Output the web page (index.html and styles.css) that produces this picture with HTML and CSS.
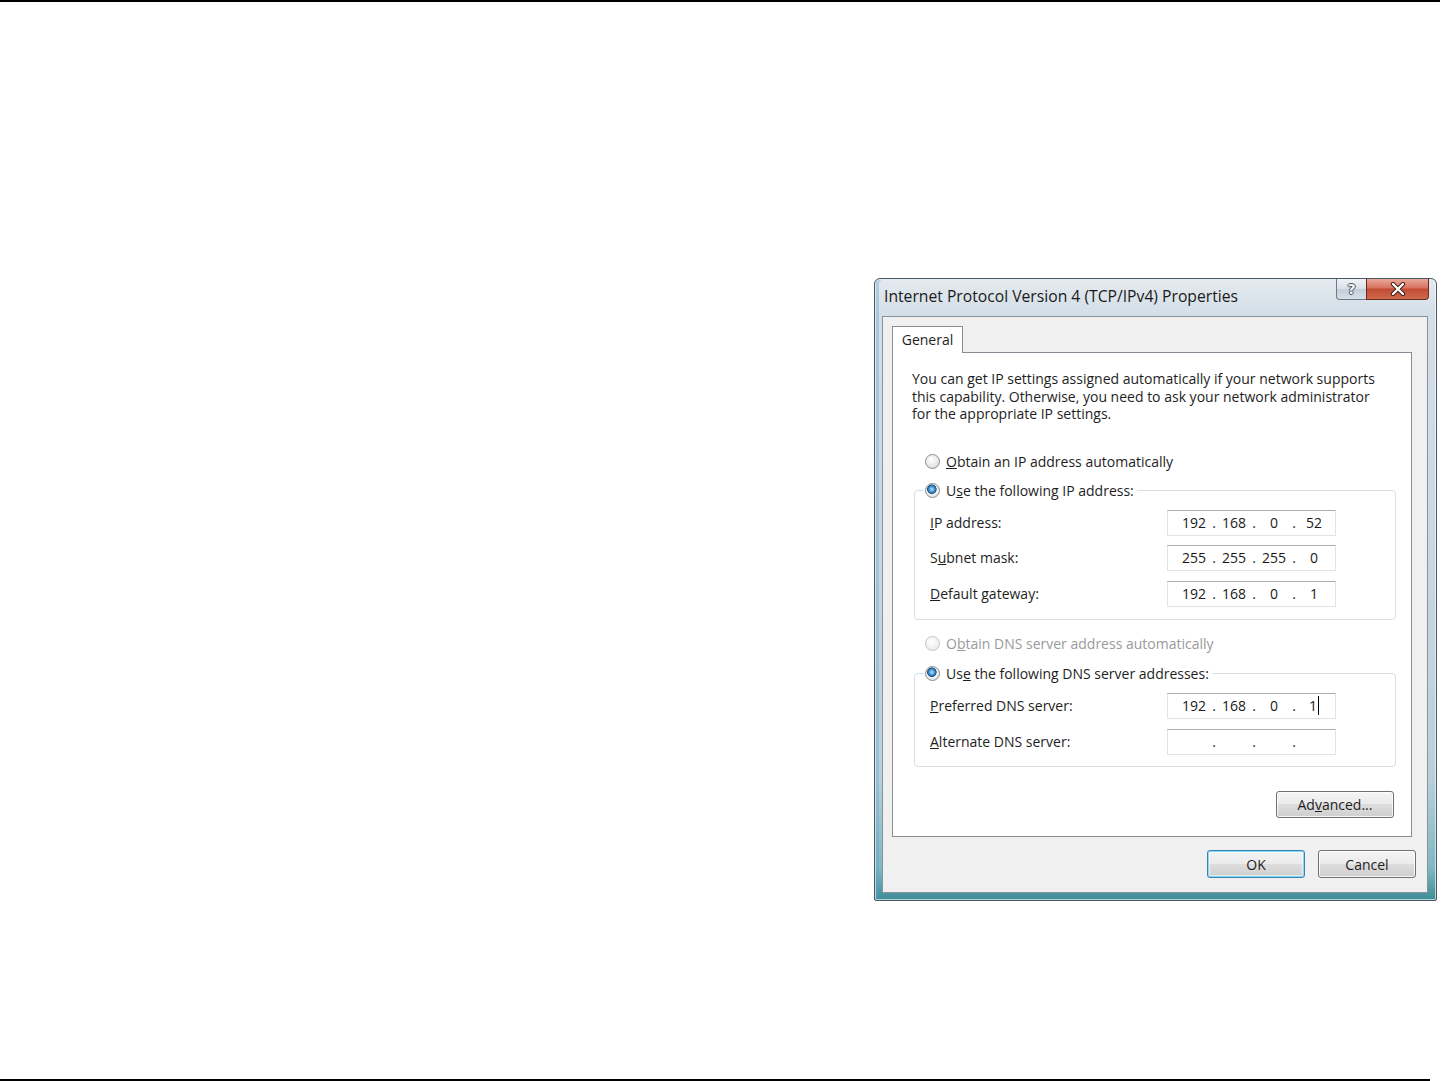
FILE: index.html
```html
<!DOCTYPE html>
<html lang="en">
<head>
    <meta charset="UTF-8">
    <meta name="viewport" content="width=device-width, initial-scale=1.0">
    <title>Internet Protocol Version 4 (TCP/IPv4) Properties</title>
    <link rel="stylesheet" href="styles.css">
</head>
<body>
    <div class="page">
        <div class="rule rule-top"></div>

        <div class="content">
            <div class="dialog">
                <div class="titlebar">
                    <span class="title">Internet Protocol Version 4 (TCP/IPv4) Properties</span>
                    <div class="caption-btns">
                        <span class="cap-btn cap-help">?</span>
                        <span class="cap-btn cap-close">
                            <svg width="18" height="14" viewBox="0 0 18 14">
                                <path d="M4 2 L14 12 M14 2 L4 12" stroke="#3a1a14" stroke-width="4.2" stroke-linecap="round"/>
                                <path d="M4 2 L14 12 M14 2 L4 12" stroke="#ffffff" stroke-width="2.4" stroke-linecap="round"/>
                            </svg>
                        </span>
                    </div>
                </div>

                <div class="client">
                    <div class="tabs">
                        <span class="tab">General</span>
                    </div>
                    <div class="tab-panel">
                        <p class="intro">You can get IP settings assigned automatically if your network supports this capability. Otherwise, you need to ask your network administrator for the appropriate IP settings.</p>

                        <div class="radio-row">
                            <span class="radio"></span>
                            <span><u>O</u>btain an IP address automatically</span>
                        </div>

                        <fieldset class="group">
                            <legend class="radio-row">
                                <span class="radio checked"></span>
                                <span>U<u>s</u>e the following IP address:</span>
                            </legend>
                            <div class="field-row">
                                <label><u>I</u>P address:</label>
                                <div class="ip-box">
                                    <span class="seg">192</span><span class="dot">.</span><span class="seg">168</span><span class="dot">.</span><span class="seg">0</span><span class="dot">.</span><span class="seg">52</span>
                                </div>
                            </div>
                            <div class="field-row">
                                <label>S<u>u</u>bnet mask:</label>
                                <div class="ip-box">
                                    <span class="seg">255</span><span class="dot">.</span><span class="seg">255</span><span class="dot">.</span><span class="seg">255</span><span class="dot">.</span><span class="seg">0</span>
                                </div>
                            </div>
                            <div class="field-row">
                                <label><u>D</u>efault gateway:</label>
                                <div class="ip-box">
                                    <span class="seg">192</span><span class="dot">.</span><span class="seg">168</span><span class="dot">.</span><span class="seg">0</span><span class="dot">.</span><span class="seg">1</span>
                                </div>
                            </div>
                        </fieldset>

                        <div class="radio-row disabled">
                            <span class="radio"></span>
                            <span>O<u>b</u>tain DNS server address automatically</span>
                        </div>

                        <fieldset class="group group-dns">
                            <legend class="radio-row">
                                <span class="radio checked"></span>
                                <span>Us<u>e</u> the following DNS server addresses:</span>
                            </legend>
                            <div class="field-row">
                                <label><u>P</u>referred DNS server:</label>
                                <div class="ip-box">
                                    <span class="seg">192</span><span class="dot">.</span><span class="seg">168</span><span class="dot">.</span><span class="seg">0</span><span class="dot">.</span><span class="seg"><span class="caret">1</span></span>
                                </div>
                            </div>
                            <div class="field-row">
                                <label><u>A</u>lternate DNS server:</label>
                                <div class="ip-box">
                                    <span class="seg"></span><span class="dot">.</span><span class="seg"></span><span class="dot">.</span><span class="seg"></span><span class="dot">.</span><span class="seg"></span>
                                </div>
                            </div>
                        </fieldset>

                        <div class="panel-actions">
                            <button class="btn btn-advanced">Ad<u>v</u>anced...</button>
                        </div>
                    </div>

                    <div class="dialog-actions">
                        <button class="btn btn-default">OK</button>
                        <button class="btn">Cancel</button>
                    </div>
                </div>
            </div>
        </div>

        <div class="rule rule-bottom"></div>
    </div>
</body>
</html>
```

FILE: styles.css
```css
/* Base Styling */
body {
    margin: 0;
    padding: 0;
    background-color: #ffffff;
    font-family: "Open Sans", "Liberation Sans", Arial, sans-serif;
}

.page {
    height: 1081px;
    display: flex;
    flex-direction: column;
}

.rule {
    height: 2px;
    background-color: #000000;
    flex-shrink: 0;
}

.rule-top {
    width: 1440px;
}

.rule-bottom {
    width: 1430px;
    margin-top: auto;
}

.content {
    padding: 276px 0 0 874px;
}

/* Dialog frame */
.dialog {
    width: 561px;
    height: 621px;
    border: 1px solid #4a5660;
    border-radius: 6px 6px 2px 2px;
    background: linear-gradient(to bottom, #e4eaef 0%, #d3dee7 6%, #cbd8e2 40%, #b9d0dc 80%, #7fb7c2 95%, #3d8c96 100%);
    display: flex;
    flex-direction: column;
    box-shadow: inset 0 0 0 1px rgba(255, 255, 255, 0.6), inset 3px 0 0 1px rgba(90, 160, 200, 0.35);
}

.titlebar {
    height: 37px;
    display: flex;
    align-items: flex-start;
    justify-content: space-between;
    flex-shrink: 0;
}

.title {
    margin: 7px 0 0 9px;
    font-size: 15.7px;
    line-height: 20px;
    color: #1a1a1a;
}

.caption-btns {
    display: flex;
    margin-right: 7px;
}

.cap-btn {
    height: 20px;
    display: flex;
    align-items: center;
    justify-content: center;
    border: 1px solid #6b7a86;
    border-top: none;
}

.cap-help {
    width: 29px;
    border-radius: 0 0 0 4px;
    border-right: none;
    background: linear-gradient(to bottom, #eef2f5 0%, #d9e1e8 50%, #c2ced8 51%, #d6e0e8 100%);
    font-family: "DejaVu Sans", sans-serif;
    font-size: 14px;
    font-weight: bold;
    color: #f4f6f8;
    text-shadow: 1px 0 0 #4a5560, -1px 0 0 #4a5560, 0 1px 0 #4a5560, 0 -1px 0 #4a5560;
}

.cap-close {
    width: 61px;
    border-color: #6a2a22;
    border-radius: 0 0 4px 0;
    background: linear-gradient(to bottom, #e9a89a 0%, #d7725f 45%, #c24a33 50%, #cf6a4c 100%);
}

/* Client area */
.client {
    flex: 1;
    margin: 0 8px 7px 7px;
    border: 1px solid #84939e;
    background-color: #f0f0f0;
    padding: 9px 0 0 9px;
    display: flex;
    flex-direction: column;
}

.tabs {
    display: flex;
}

.tab {
    position: relative;
    z-index: 1;
    height: 26px;
    width: 69px;
    margin-bottom: -1px;
    border: 1px solid #898c95;
    border-bottom: none;
    background-color: #ffffff;
    font-size: 14px;
    line-height: 25px;
    text-align: center;
    color: #1e1e1e;
}

.tab-panel {
    width: 520px;
    height: 485px;
    border: 1px solid #898c95;
    background-color: #ffffff;
    padding: 17px 0 0 0;
    box-sizing: border-box;
    font-size: 14px;
    line-height: 18px;
    color: #1e1e1e;
    display: flex;
    flex-direction: column;
}

.intro {
    margin: 0 0 0 19px;
    width: 474px;
    line-height: 17.5px;
}

.radio-row {
    display: flex;
    align-items: center;
    gap: 6px;
    height: 18px;
    margin: 30px 0 0 32px;
}

.radio-row.disabled {
    color: #9a9a9a;
    margin-top: 15px;
}

.radio-row.disabled .radio {
    border-color: #c4c4c4;
    background: radial-gradient(circle at 40% 35%, #ffffff 0%, #f0f0f0 60%, #e0e0e0 100%);
}

.radio {
    width: 13px;
    height: 13px;
    border-radius: 50%;
    border: 1px solid #8a8d92;
    background: radial-gradient(circle at 40% 35%, #ffffff 0%, #e8e8e8 55%, #c9c9c9 100%);
    flex-shrink: 0;
}

.radio.checked {
    background: radial-gradient(circle at 45% 40%, #b8e6ff 0%, #3b8fd0 28%, #1c4f7c 42%, #f4f4f4 48%, #e4e4e4 70%, #c8c8c8 100%);
}

/* Group boxes */
.group {
    margin: 11px 15px 0 21px;
    padding: 10px 0 12px 15px;
    border: 1px solid #d5dfe5;
    border-radius: 4px;
    display: flex;
    flex-direction: column;
    gap: 9.5px;
}

.group legend.radio-row {
    margin: 0 0 0 -6px;
    padding: 0 3px 0 1px;
}

.group-dns {
    margin-top: 12px;
    padding-top: 10px;
    padding-bottom: 11px;
    gap: 10px;
}

.field-row {
    display: flex;
    align-items: center;
    height: 26px;
}

.field-row label {
    width: 237px;
}

.ip-box {
    width: 158px;
    height: 24px;
    padding-left: 9px;
    border: 1px solid #e2e3ea;
    border-top-color: #abadb3;
    display: flex;
    align-items: center;
    font-size: 14px;
    color: #1a1a1a;
}

.seg {
    width: 34px;
    text-align: center;
}

.dot {
    width: 6px;
    text-align: center;
}

.caret {
    border-right: 1px solid #000000;
    padding-right: 1px;
}

/* Buttons */
.panel-actions {
    display: flex;
    justify-content: flex-end;
    margin: 24px 17px 0 0;
}

.btn {
    width: 98px;
    height: 28px;
    padding: 0;
    font-family: "Open Sans", "Liberation Sans", Arial, sans-serif;
    font-size: 14px;
    color: #1e1e1e;
    border: 1px solid #707070;
    border-radius: 3px;
    background: linear-gradient(to bottom, #f4f4f4 0%, #ebebeb 48%, #dddddd 50%, #cfcfcf 100%);
    box-shadow: inset 0 0 0 1px rgba(255, 255, 255, 0.8);
}

.btn-advanced {
    width: 118px;
    height: 27px;
}

.btn-default {
    border-color: #3c7fb1;
    box-shadow: inset 0 0 0 1px #7fdcf6, inset 0 0 0 2px rgba(255, 255, 255, 0.5);
}

.dialog-actions {
    display: flex;
    justify-content: flex-end;
    gap: 13px;
    margin: 13px 11px 0 0;
}
```
